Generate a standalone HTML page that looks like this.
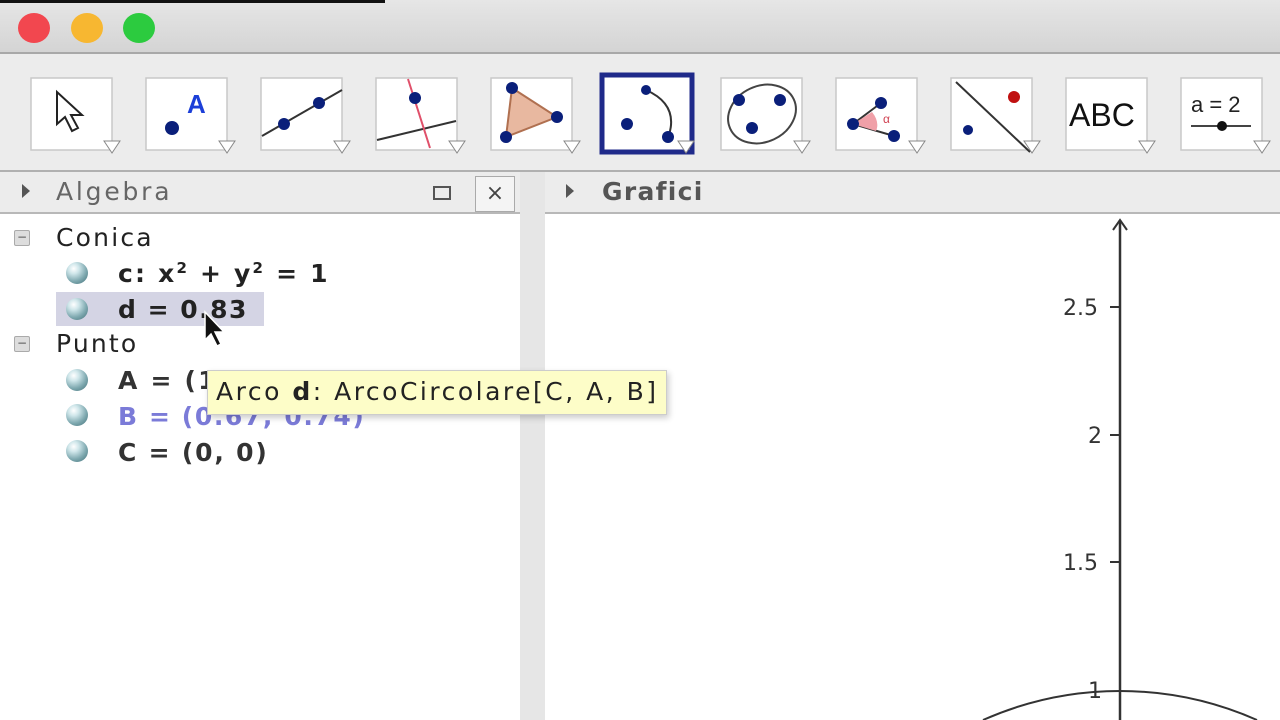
<!DOCTYPE html>
<html style="overflow:hidden"><head><meta charset="utf-8"><style>
body{margin:0;width:1280px;height:720px;overflow:hidden;background:#fff;font-family:"DejaVu Sans","Liberation Sans",sans-serif;position:relative}
.abs{position:absolute}
.t{font-size:25px;color:#222;position:absolute;white-space:nowrap;letter-spacing:2.2px}
.ball{position:absolute;width:22px;height:22px;border-radius:50%;background:radial-gradient(circle at 35% 30%,#fff 0,#cfe6ea 25%,#7fa9b0 60%,#3f6d75 100%)}
</style></head><body>
<div class="abs" style="left:0;top:0;width:1280px;height:52px;background:linear-gradient(#e6e6e6,#d4d4d4);border-bottom:2px solid #a8a8a8"></div>
<div class="abs" style="left:0;top:0;width:385px;height:3px;background:#111"></div>
<div class="abs" style="left:18px;top:13px;width:32px;height:30px;border-radius:50%;background:#f2474f"></div>
<div class="abs" style="left:71px;top:13px;width:32px;height:30px;border-radius:50%;background:#f7b731"></div>
<div class="abs" style="left:123px;top:13px;width:32px;height:30px;border-radius:50%;background:#2ccb3f"></div>
<div class="abs" style="left:0;top:54px;width:1280px;height:116px;background:#ececec;border-bottom:2px solid #b0b0b0"></div>
<svg class="abs" style="left:0;top:0" width="1280" height="170" font-family="Liberation Sans">
<g fill="#fff" stroke="#c8c8c8" stroke-width="1.5">
<rect x="31" y="78" width="81" height="72"/><rect x="146" y="78" width="81" height="72"/><rect x="261" y="78" width="81" height="72"/><rect x="376" y="78" width="81" height="72"/><rect x="491" y="78" width="81" height="72"/>
<rect x="721" y="78" width="81" height="72"/><rect x="836" y="78" width="81" height="72"/><rect x="951" y="78" width="81" height="72"/><rect x="1066" y="78" width="81" height="72"/><rect x="1181" y="78" width="81" height="72"/>
</g>
<path d="M57 92 L57 124 L65 117 L72 131 L78 128 L71 115 L82 115 Z" fill="#fff" stroke="#222" stroke-width="2"/>
<circle cx="172" cy="128" r="7" fill="#0a1f7a"/><text x="187" y="113" font-size="26" font-weight="bold" fill="#1c3fd8">A</text>
<line x1="262" y1="136" x2="342" y2="90" stroke="#333" stroke-width="2"/><circle cx="284" cy="124" r="6" fill="#0a1f7a"/><circle cx="319" cy="103" r="6" fill="#0a1f7a"/>
<line x1="377" y1="140" x2="456" y2="121" stroke="#333" stroke-width="2"/><line x1="408" y1="79" x2="430" y2="148" stroke="#e0506a" stroke-width="2"/><circle cx="415" cy="98" r="6" fill="#0a1f7a"/>
<path d="M512 88 L557 117 L506 137 Z" fill="#e8b8a0" stroke="#b07050" stroke-width="2"/><circle cx="512" cy="88" r="6" fill="#0a1f7a"/><circle cx="557" cy="117" r="6" fill="#0a1f7a"/><circle cx="506" cy="137" r="6" fill="#0a1f7a"/>
<rect x="602" y="75" width="90" height="77" fill="#fff" stroke="#1f2a8a" stroke-width="5"/>
<path d="M646 90 Q680 105 668 138" fill="none" stroke="#333" stroke-width="2"/><circle cx="646" cy="90" r="5" fill="#0a1f7a"/><circle cx="668" cy="137" r="6" fill="#0a1f7a"/><circle cx="627" cy="124" r="6" fill="#0a1f7a"/>
<ellipse cx="762" cy="114" rx="35" ry="28" transform="rotate(-25 762 114)" fill="none" stroke="#444" stroke-width="2"/><circle cx="739" cy="100" r="6" fill="#0a1f7a"/><circle cx="752" cy="128" r="6" fill="#0a1f7a"/><circle cx="780" cy="100" r="6" fill="#0a1f7a"/>
<path d="M853 124 L881 103 M853 124 L894 136" stroke="#333" stroke-width="2"/><path d="M853 124 L872 112 Q880 122 876 131 Z" fill="#f0a0a8"/><text x="883" y="123" font-size="12" fill="#d04050">α</text><circle cx="853" cy="124" r="6" fill="#0a1f7a"/><circle cx="881" cy="103" r="6" fill="#0a1f7a"/><circle cx="894" cy="136" r="6" fill="#0a1f7a"/>
<line x1="956" y1="82" x2="1030" y2="152" stroke="#333" stroke-width="2"/><circle cx="1014" cy="97" r="6" fill="#c01010"/><circle cx="968" cy="130" r="5" fill="#0a1f7a"/>
<text x="1069" y="126" font-size="32" fill="#111">ABC</text>
<text x="1191" y="112" font-size="22" fill="#222">a = 2</text><line x1="1191" y1="126" x2="1251" y2="126" stroke="#444" stroke-width="2"/><circle cx="1222" cy="126" r="5" fill="#111"/>
<g fill="#fff" stroke="#888" stroke-width="1">
<path d="M104 141h16l-8 12z"/><path d="M219 141h16l-8 12z"/><path d="M334 141h16l-8 12z"/><path d="M449 141h16l-8 12z"/><path d="M564 141h16l-8 12z"/><path d="M678 141h16l-8 12z"/><path d="M794 141h16l-8 12z"/><path d="M909 141h16l-8 12z"/><path d="M1024 141h16l-8 12z"/><path d="M1139 141h16l-8 12z"/><path d="M1254 141h16l-8 12z"/>
</g>
</svg>
<div class="abs" style="left:0;top:172px;width:520px;height:40px;background:#ececec;border-bottom:2px solid #b8b8b8"></div>
<div class="abs" style="left:545px;top:172px;width:735px;height:40px;background:#ececec;border-bottom:2px solid #b8b8b8"></div>
<div class="abs" style="left:520px;top:172px;width:25px;height:548px;background:#e6e6e6"></div>
<div class="abs" style="left:22px;top:184px;width:0;height:0;border-left:8px solid #555;border-top:7px solid transparent;border-bottom:7px solid transparent"></div>
<div class="abs" style="left:566px;top:184px;width:0;height:0;border-left:8px solid #555;border-top:7px solid transparent;border-bottom:7px solid transparent"></div>
<div class="t" style="left:56px;top:177px;color:#666;letter-spacing:2.8px">Algebra</div>
<div class="t" style="left:602px;top:177px;color:#555;font-weight:bold;letter-spacing:1.3px">Grafici</div>
<div class="abs" style="left:433px;top:186px;width:14px;height:10px;border:2px solid #555"></div>
<div class="abs" style="left:475px;top:176px;width:38px;height:34px;border:1px solid #aaa;background:#f4f4f4;font-size:22px;text-align:center;line-height:34px;color:#444">×</div>
<div class="abs" style="left:14px;top:230px;width:14px;height:14px;background:#ddd;border:1px solid #aaa;border-radius:2px;font-size:12px;line-height:12px;text-align:center;color:#555">−</div>
<div class="abs" style="left:14px;top:336px;width:14px;height:14px;background:#ddd;border:1px solid #aaa;border-radius:2px;font-size:12px;line-height:12px;text-align:center;color:#555">−</div>
<div class="t" style="left:56px;top:223px">Conica</div>
<div class="t" style="left:56px;top:329px">Punto</div>
<div class="abs" style="left:56px;top:292px;width:208px;height:34px;background:#d4d4e4"></div>
<div class="ball" style="left:66px;top:262px"></div><div class="ball" style="left:66px;top:298px"></div><div class="ball" style="left:66px;top:369px"></div><div class="ball" style="left:66px;top:404px"></div><div class="ball" style="left:66px;top:440px"></div>
<div class="t" style="left:118px;top:259px;font-weight:bold">c: x<span style="font-size:15px;vertical-align:9px">2</span> + y<span style="font-size:15px;vertical-align:9px">2</span> = 1</div>
<div class="t" style="left:118px;top:295px;font-weight:bold;letter-spacing:1.5px">d = 0.83</div>
<div class="t" style="left:118px;top:366px;font-weight:bold;color:#333">A = (1</div>
<div class="t" style="left:118px;top:402px;font-weight:bold;color:#7b7bd8;letter-spacing:1.6px">B = (0.67, 0.74)</div>
<div class="t" style="left:118px;top:438px;font-weight:bold;color:#333;letter-spacing:1.8px">C = (0, 0)</div>
<svg class="abs" style="left:200px;top:310px" width="30" height="40"><path d="M5 2 L5 30 L11 24 L17 36 L21 34 L15 22 L24 22 Z" fill="#111" stroke="#fff" stroke-width="1.5"/></svg>
<div class="abs" style="left:207px;top:370px;width:458px;height:43px;background:#fdfdc8;border:1px solid #ccc;box-shadow:2px 3px 6px rgba(0,0,0,.2)"></div>
<div class="t" style="left:216px;top:377px;letter-spacing:2.5px">Arco <b>d</b>: ArcoCircolare[C, A, B]</div>
<svg class="abs" style="left:545px;top:214px;overflow:hidden" width="735" height="506" font-family="DejaVu Sans" font-size="22" fill="#333">
<line x1="575" y1="6" x2="575" y2="506" stroke="#333" stroke-width="2.5"/>
<path d="M568 16 L575 6 L582 16" fill="none" stroke="#333" stroke-width="2"/>
<g stroke="#333" stroke-width="2"><line x1="565" y1="93" x2="575" y2="93"/><line x1="565" y1="221" x2="575" y2="221"/><line x1="565" y1="348" x2="575" y2="348"/></g>
<text x="518" y="101">2.5</text><text x="543" y="229">2</text><text x="518" y="356">1.5</text><text x="543" y="484">1</text>
<path d="M438 506 A338 338 0 0 1 712 506" fill="none" stroke="#333" stroke-width="2"/>
</svg>
</body></html>
